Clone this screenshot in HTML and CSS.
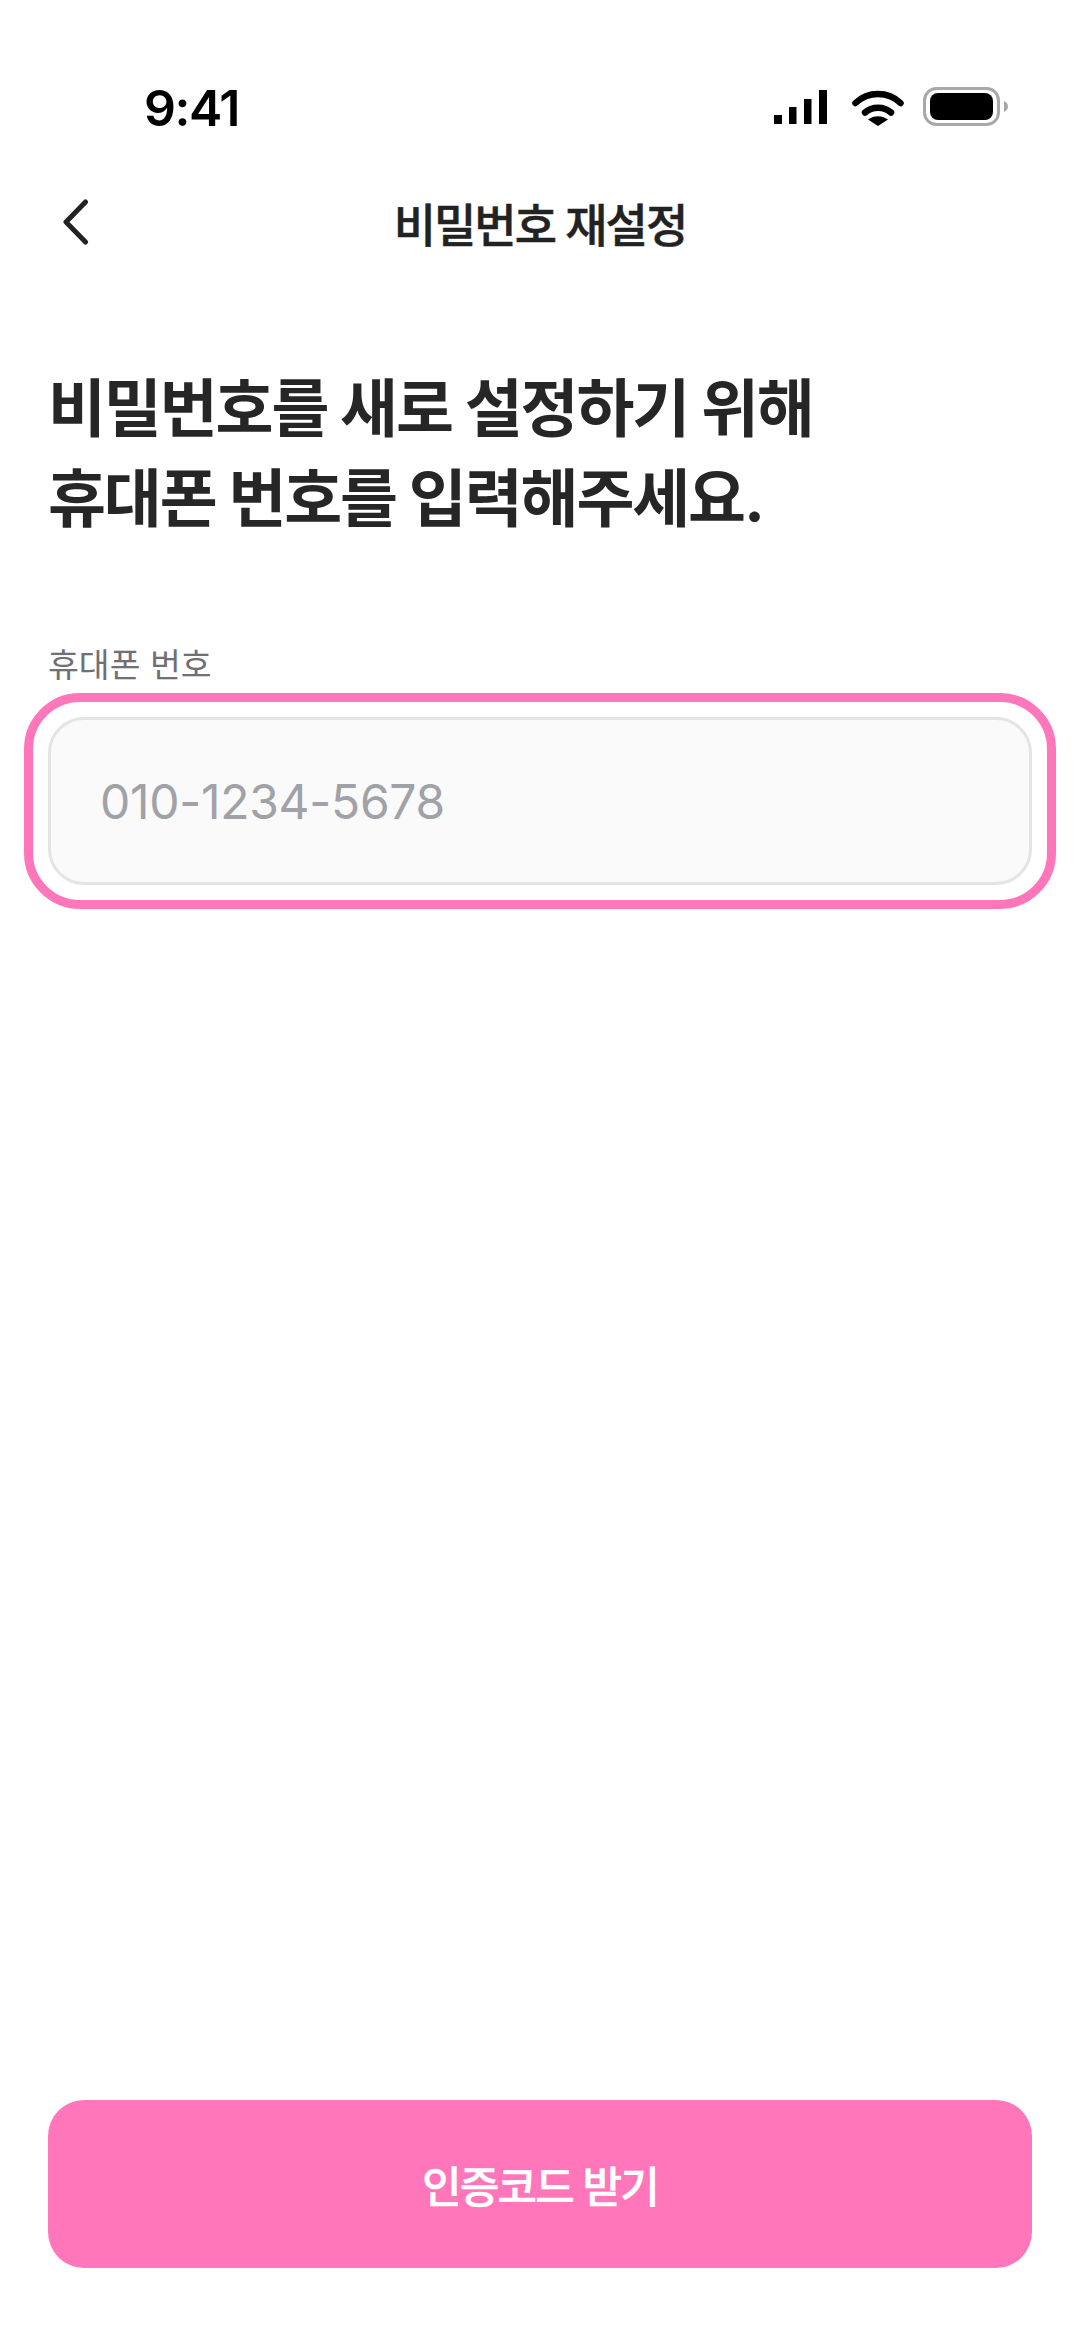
FILE: index.html
```html
<!DOCTYPE html>
<html lang="ko">
	<head>
		<meta charset="utf-8">
		<title>비밀번호 재설정</title>
		<link rel="stylesheet" href="styles.css">
	</head>
	<body>
		<div class="screen">
			<div class="status">
				<span class="time">9:41</span>
				<div class="status-icons">
					<svg class="signal" width="53" height="34" viewBox="0 0 53 34">
						<rect x="0" y="25" width="8" height="9"/>
						<rect x="15" y="17" width="7.500" height="17"/>
						<rect x="30" y="9" width="7.500" height="25"/>
						<rect x="45" y="0" width="8" height="34"/>
					</svg>
					<svg class="wifi" width="52" height="36" viewBox="0 0 52 36">
						<path d="M3.500 13C16 1 36 1 48.500 13" fill="none" stroke="#000" stroke-width="6.500" stroke-linecap="round"/>
						<path d="M13 22.500C20 16 32 16 39 22.500" fill="none" stroke="#000" stroke-width="6.500" stroke-linecap="round"/>
						<path d="M26 36L16 29.500C22 25 30 25 36 29.500Z"/>
					</svg>
					<svg class="battery" width="85" height="39" viewBox="0 0 85 39">
						<rect x="1.500" y="1.500" width="74" height="36" rx="12" fill="none" stroke="#a8a8a8" stroke-width="3"/>
						<rect x="7" y="6" width="63" height="27" rx="8"/>
						<path d="M81 14C83.500 15 85 17 85 19.500C85 22 83.500 24 81 25Z" fill="#a8a8a8"/>
					</svg>
				</div>
			</div>
			<div class="top-bar">
				<svg class="back" width="30" height="46" viewBox="0 0 30 46">
					<path d="M25.500 3L6 23L25.500 43" fill="none" stroke="#222" stroke-width="5" stroke-linecap="round" stroke-linejoin="round"/>
				</svg>
				<h1 class="title">비밀번호 재설정</h1>
			</div>
			<h2 class="heading">비밀번호를 새로 설정하기 위해<br>휴대폰 번호를 입력해주세요.</h2>
			<label class="label">휴대폰 번호</label>
			<div class="ring">
				<div class="field">010-1234-5678</div>
			</div>
			<div class="spacer"></div>
			<div class="btn">인증코드 받기</div>
		</div>
	</body>
</html>
```

FILE: styles.css
```css
* {
	box-sizing: border-box;
}
html, body {
	margin: 0;
	padding: 0;
	background: #fff;
}
body {
	font-family: Inter, "Noto Sans CJK KR", sans-serif;
}
.screen {
	width: 1080px;
	height: 2340px;
	display: flex;
	flex-direction: column;
	overflow: hidden;
}
.status {
	height: 170px;
	padding: 80px 72px 0 144px;
	display: flex;
	justify-content: space-between;
	align-items: flex-start;
}
.time {
	font-size: 50px;
	line-height: 56px;
	font-weight: 600;
	letter-spacing: -1.500px;
	color: #000;
}
.status-icons {
	display: flex;
	align-items: flex-end;
	gap: 19px;
	padding: 7px 0 0;
	height: 46px;
}
.signal {
	margin: 0 6px 2px 0;
}
.top-bar {
	height: 104px;
	position: relative;
	display: flex;
	align-items: center;
	justify-content: center;
}
.back {
	position: absolute;
	left: 60px;
	top: 29px;
}
.title {
	margin: 0;
	font-size: 46px;
	font-weight: 500;
	letter-spacing: -2px;
	-webkit-text-stroke: 0.500px #222;
	color: #222;
}
.heading {
	margin: 89px 0 0;
	padding: 0 48px;
	font-size: 63px;
	line-height: 90px;
	font-weight: 700;
	letter-spacing: -2.100px;
	color: #262626;
}
.label {
	display: block;
	margin: 98px 0 0;
	padding: 0 48px;
	font-size: 33.500px;
	line-height: 48px;
	color: #6f6f74;
}
.ring {
	margin: 4px 24px 0;
	height: 216px;
	padding: 15px;
	border: 9px solid #ff76ba;
	border-radius: 56px;
}
.field {
	height: 168px;
	padding: 0 49px;
	display: flex;
	align-items: center;
	font-size: 48px;
	letter-spacing: -0.300px;
	color: #a1a1a8;
	background: #fafafa;
	border: 3px solid #e4e4e4;
	border-radius: 36px;
}
.spacer {
	flex: 1;
}
.btn {
	margin: 0 48px 72px;
	height: 168px;
	display: flex;
	align-items: center;
	justify-content: center;
	font-size: 43px;
	font-weight: 500;
	letter-spacing: -1.800px;
	-webkit-text-stroke: 0.500px #fff;
	color: #fff;
	background: #ff76ba;
	border-radius: 36px;
}
```
